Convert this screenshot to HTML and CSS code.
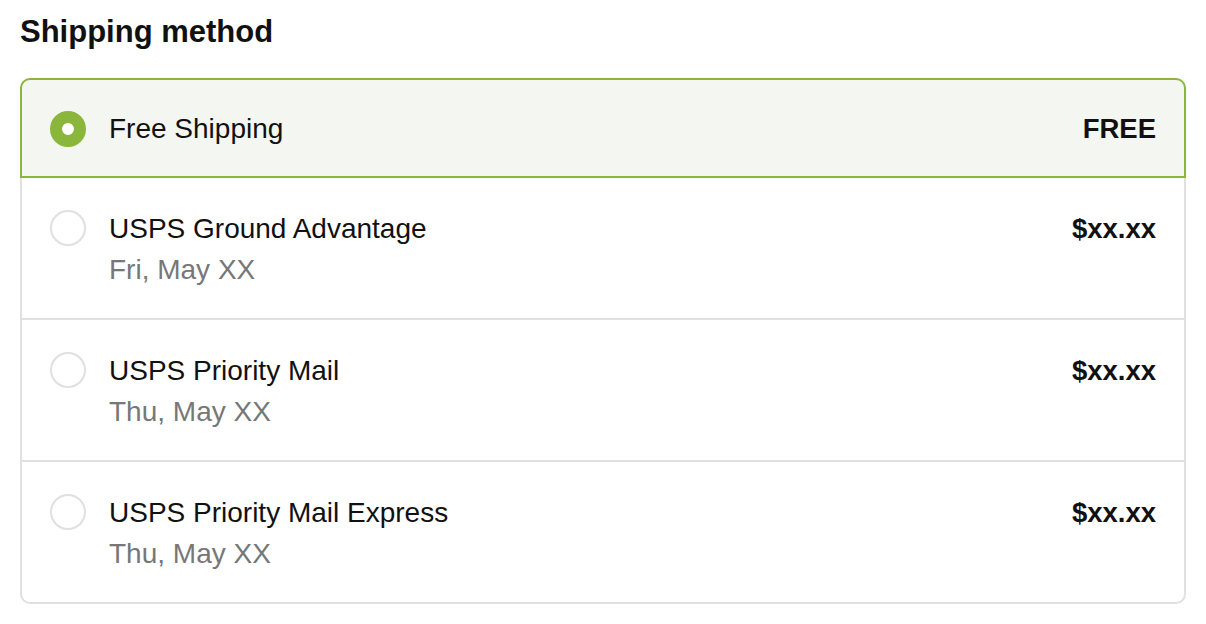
FILE: index.html
```html
<!DOCTYPE html>
<html lang="en">
<head>
  <meta charset="UTF-8" />
  <meta name="viewport" content="width=device-width, initial-scale=1.0"/>
  <title>Shipping method</title>
  <link rel="stylesheet" href="styles.css">
</head>
<body>

  <h1>Shipping method</h1>

  <div class="options">
    <label class="option selected">
      <span class="radio"></span>
      <span class="info">
        <span class="name">Free Shipping</span>
      </span>
      <span class="price">FREE</span>
    </label>

    <label class="option">
      <span class="radio"></span>
      <span class="info">
        <span class="name">USPS Ground Advantage</span>
        <span class="date">Fri, May XX</span>
      </span>
      <span class="price">$xx.xx</span>
    </label>

    <label class="option">
      <span class="radio"></span>
      <span class="info">
        <span class="name">USPS Priority Mail</span>
        <span class="date">Thu, May XX</span>
      </span>
      <span class="price">$xx.xx</span>
    </label>

    <label class="option">
      <span class="radio"></span>
      <span class="info">
        <span class="name">USPS Priority Mail Express</span>
        <span class="date">Thu, May XX</span>
      </span>
      <span class="price">$xx.xx</span>
    </label>
  </div>

</body>
</html>
```

FILE: styles.css
```css
body {
  margin: 0;
  padding: 14px 20px;
  font-family: "Liberation Sans", Arial, sans-serif;
  color: #111;
  background-color: #fff;
}

h1 {
  margin: 0 0 28px;
  font-size: 31px;
  line-height: 36px;
  font-weight: bold;
}

.options {
  display: flex;
  flex-direction: column;
}

.option {
  position: relative;
  display: flex;
  align-items: flex-start;
  gap: 23px;
  padding: 30px 28px 28px;
  margin-top: -2px;
  border: 2px solid #e0e0e0;
  background-color: #fff;
  cursor: pointer;
}

.option:first-child {
  margin-top: 0;
  border-radius: 10px 10px 0 0;
}

.option:last-child {
  border-radius: 0 0 10px 10px;
}

.option.selected {
  z-index: 1;
  padding-top: 29px;
  padding-bottom: 27px;
  border-color: #8ab63c;
  background-color: #f4f6f1;
}

.radio {
  flex: none;
  width: 36px;
  height: 36px;
  margin-top: 2px;
  box-sizing: border-box;
  border: 2px solid #e0e0e0;
  border-radius: 50%;
  background-color: #fff;
}

.selected .radio {
  border: 12px solid #8ab63c;
}

.info {
  flex: 1;
  display: flex;
  flex-direction: column;
}

.name,
.date,
.price {
  font-size: 28px;
  line-height: 41px;
}

.selected .name,
.selected .price {
  line-height: 40px;
}

.date {
  color: #777;
}

.price {
  font-weight: bold;
  font-size: 27.5px;
}
```
